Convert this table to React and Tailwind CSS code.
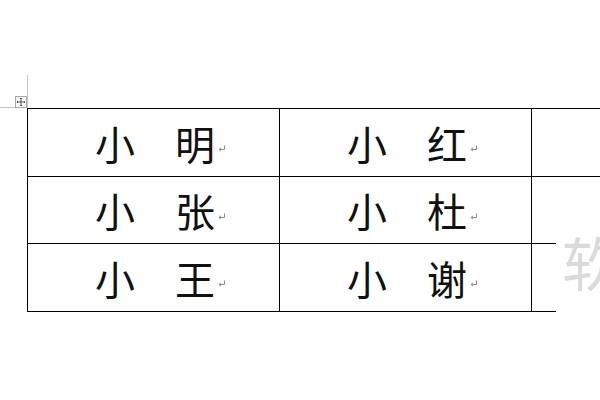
const rows = [
  ["小　明", "小　红"],
  ["小　张", "小　杜"],
  ["小　王", "小　谢"],
];

function ReturnMark() {
  return (
    <svg width="8" height="7" viewBox="0 0 8 7" className="ml-[3px] mt-[12px] shrink-0">
      <path d="M6.5 0.5 V4.5 H1.5" fill="none" stroke="#8a8a8a" strokeWidth="1" />
      <path d="M3 2.8 L1 4.5 L3 6.2" fill="none" stroke="#8a8a8a" strokeWidth="1" />
    </svg>
  );
}

function Cell({ text }) {
  return (
    <div className="w-[252px] h-full border-l border-black flex items-center pl-[67px]">
      <span className="text-[40px] leading-none font-normal text-[#111]">{text}</span>
      <ReturnMark />
    </div>
  );
}

export default function App() {
  return (
    <div
      className="relative w-[600px] h-[400px] bg-white overflow-hidden"
      style={{ fontFamily: '"Noto Sans CJK SC", "Noto Sans", sans-serif' }}
    >
      {/* margin marks + table move handle */}
      <div className="absolute left-[27px] top-[75px] w-px h-[33px] bg-[#c4c4c4]" />
      <div className="absolute left-0 top-[107px] w-[15px] h-px bg-[#c4c4c4]" />
      <div className="absolute left-[15px] top-[96px] w-[12px] h-[12px] border border-[#a8a8a8] bg-white flex items-center justify-center">
        <svg width="10" height="10" viewBox="0 0 10 10">
          <path d="M5 1 V9 M1 5 H9" stroke="#555" strokeWidth="1" />
          <path d="M4 2 L5 1 L6 2 M4 8 L5 9 L6 8 M2 4 L1 5 L2 6 M8 4 L9 5 L8 6" fill="none" stroke="#555" strokeWidth="1" />
        </svg>
      </div>

      {/* table */}
      <div className="ml-[27px] pt-[108px] flex flex-col">
        <div className="w-[573px] h-[68px] border-t border-black flex">
          <Cell text={rows[0][0]} />
          <Cell text={rows[0][1]} />
          <div className="flex-1 border-l border-black" />
        </div>
        <div className="w-[573px] h-[67px] border-t border-black flex">
          <Cell text={rows[1][0]} />
          <Cell text={rows[1][1]} />
          <div className="flex-1 border-l border-black" />
        </div>
        <div className="w-[529px] h-[69px] border-y border-black flex">
          <Cell text={rows[2][0]} />
          <Cell text={rows[2][1]} />
          <div className="flex-1 border-l border-black" />
        </div>
      </div>

      {/* watermark */}
      <div className="absolute left-[562px] top-[232px] text-[58px] leading-none text-[#dadada]">软</div>
    </div>
  );
}
